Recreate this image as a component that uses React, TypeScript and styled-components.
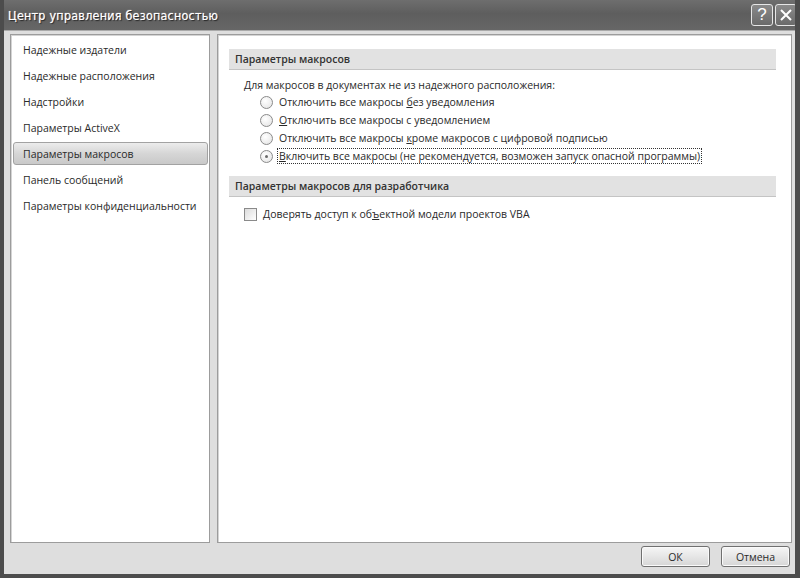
import { createGlobalStyle } from 'styled-components'
import styled from 'styled-components'

const GlobalStyle = createGlobalStyle`
  html, body {
    margin: 0;
    padding: 0;
    background: #dedede;
  }
  body {
    font-family: 'Open Sans', 'Noto Sans', sans-serif;
  }
`

const menuItems = [
  'Надежные издатели',
  'Надежные расположения',
  'Надстройки',
  'Параметры ActiveX',
  'Параметры макросов',
  'Панель сообщений',
  'Параметры конфиденциальности',
]

const Window = styled.div`
  width: 800px;
  height: 578px;
  box-sizing: border-box;
  display: flex;
  flex-direction: column;
  background: #dedede;
  border-left: 4px solid #4c4c4c;
  border-right: 5px solid #4c4c4c;
  border-bottom: 4px solid #4c4c4c;
  overflow: hidden;
`

const TitleBar = styled.div`
  height: 30px;
  flex: none;
  margin: 0 -5px 0 -4px;
  padding: 0 3px 0 8px;
  display: flex;
  align-items: center;
  justify-content: space-between;
  background: linear-gradient(#6e6e6e 0%, #5e5e5e 45%, #666 100%);
  border-bottom: 1px solid #aaa;
`

const Title = styled.div`
  color: #fff;
  font-family: 'DejaVu Sans Condensed', 'DejaVu Sans', sans-serif;
  font-size: 12.5px;
  letter-spacing: 0.2px;
  text-shadow: 1px 1px 1px #222, 0 0 1px #fff;
`

const TitleButtons = styled.div`
  display: flex;
  gap: 2px;
`

const TitleButton = styled.div`
  width: 20px;
  height: 20px;
  border: 1px solid #e6e6e6;
  border-radius: 3px;
  background: linear-gradient(#8a8a8a, #6a6a6a);
  color: #fff;
  display: flex;
  align-items: center;
  justify-content: center;
  font-family: 'Liberation Sans', sans-serif;
  font-size: 17px;
`

const Body = styled.div`
  flex: 1;
  display: flex;
  gap: 7px;
  padding: 3px 3px 0 6px;
  min-height: 0;
`

const Panel = styled.div<{ $width?: number }>`
  ${(p) => (p.$width ? `width: ${p.$width}px; flex: none;` : 'flex: 1;')}
  box-sizing: border-box;
  background: #fff;
  border: 1px solid #9c9c9c;
  box-shadow: inset 1px 1px 0 #d4d4d4;
`

const Menu = styled.div`
  display: flex;
  flex-direction: column;
  padding: 2px 1px 0 2px;
`

const MenuItem = styled.div<{ $active?: boolean }>`
  height: 26px;
  box-sizing: border-box;
  display: flex;
  align-items: center;
  padding-left: 9px;
  font-size: 10.5px;
  color: #2a2a2a;
  border-radius: 3px;
  border: 1px solid ${(p) => (p.$active ? '#a2a2a2' : 'transparent')};
  background: ${(p) => (p.$active ? 'linear-gradient(#ececec, #d6d6d6 50%, #c9c9c9)' : 'transparent')};
  ${(p) => (p.$active ? 'height: 23px; margin: 1px 0 2px;' : '')}
`

const Content = styled.div`
  padding: 14px 15px 0 11px;
  display: flex;
  flex-direction: column;
`

const SectionHeader = styled.div`
  height: 21px;
  box-sizing: border-box;
  display: flex;
  align-items: center;
  padding-left: 6px;
  background: #e2e2e2;
  border-bottom: 1px solid #c4c4c4;
  font-size: 10.5px;
  font-weight: 600;
  color: #333;
`

const Label = styled.div`
  margin: 7px 0 0 15px;
  font-size: 10.5px;
  color: #2a2a2a;
  line-height: 16px;
`

const Options = styled.div`
  display: flex;
  flex-direction: column;
  padding-left: 31px;
  margin-bottom: 11px;
`

const Option = styled.div`
  height: 18px;
  display: flex;
  align-items: center;
  gap: 4px;
  font-size: 10.5px;
  color: #2a2a2a;
`

const Radio = styled.span<{ $checked?: boolean }>`
  width: 11px;
  height: 11px;
  flex: none;
  border-radius: 50%;
  border: 1px solid #8a8a8a;
  background: radial-gradient(circle at 40% 35%, #fff, #e2e2e2);
  display: flex;
  align-items: center;
  justify-content: center;
  &::after {
    content: '';
    width: 3px;
    height: 3px;
    border-radius: 50%;
    background: ${(p) => (p.$checked ? '#6a6a6a' : 'transparent')};
  }
`

const OptionText = styled.span<{ $focused?: boolean }>`
  padding: 0 1px;
  border: 1px dotted ${(p) => (p.$focused ? '#333' : 'transparent')};
  line-height: 14px;
`

const CheckRow = styled.div`
  display: flex;
  align-items: center;
  gap: 6px;
  margin: 10px 0 0 15px;
  font-size: 10.5px;
  color: #2a2a2a;
`

const Checkbox = styled.span`
  width: 11px;
  height: 11px;
  flex: none;
  border: 1px solid #8a8a8a;
  background: linear-gradient(135deg, #dcdcdc, #fff);
`

const Footer = styled.div`
  height: 31px;
  flex: none;
  box-sizing: border-box;
  padding: 3px 5px 0 0;
  display: flex;
  align-items: flex-start;
  justify-content: flex-end;
  gap: 11px;
`

const Button = styled.button`
  width: 69px;
  height: 21px;
  box-sizing: border-box;
  border: 1px solid #707070;
  border-radius: 3px;
  background: linear-gradient(#f6f6f6, #e6e6e6 50%, #d6d6d6);
  box-shadow: inset 0 0 0 1px #fafafa;
  font-family: 'Open Sans', 'Noto Sans', sans-serif;
  font-size: 10.5px;
  color: #2a2a2a;
  padding: 0;
`

export default function App() {
  return (
    <>
      <GlobalStyle />
      <Window>
        <TitleBar>
          <Title>Центр управления безопасностью</Title>
          <TitleButtons>
            <TitleButton>?</TitleButton>
            <TitleButton>
              <svg width="14" height="14" viewBox="0 0 14 14">
                <path d="M2 2 L12 12 M12 2 L2 12" stroke="#fff" strokeWidth="2" />
              </svg>
            </TitleButton>
          </TitleButtons>
        </TitleBar>
        <Body>
          <Panel $width={200}>
            <Menu>
              {menuItems.map((item) => (
                <MenuItem key={item} $active={item === 'Параметры макросов'}>
                  {item}
                </MenuItem>
              ))}
            </Menu>
          </Panel>
          <Panel>
            <Content>
              <SectionHeader>Параметры макросов</SectionHeader>
              <Label>Для макросов в документах не из надежного расположения:</Label>
              <Options>
                <Option>
                  <Radio />
                  <OptionText>
                    Отключить все макросы <u>б</u>ез уведомления
                  </OptionText>
                </Option>
                <Option>
                  <Radio />
                  <OptionText>
                    <u>О</u>тключить все макросы с уведомлением
                  </OptionText>
                </Option>
                <Option>
                  <Radio />
                  <OptionText>
                    Отключить все макросы <u>к</u>роме макросов с цифровой подписью
                  </OptionText>
                </Option>
                <Option>
                  <Radio $checked />
                  <OptionText $focused>
                    <u>В</u>ключить все макросы (не рекомендуется, возможен запуск опасной программы)
                  </OptionText>
                </Option>
              </Options>
              <SectionHeader>Параметры макросов для разработчика</SectionHeader>
              <CheckRow>
                <Checkbox />
                <span>
                  Доверять доступ к об<u>ъ</u>ектной модели проектов VBA
                </span>
              </CheckRow>
            </Content>
          </Panel>
        </Body>
        <Footer>
          <Button>ОК</Button>
          <Button>Отмена</Button>
        </Footer>
      </Window>
    </>
  )
}
